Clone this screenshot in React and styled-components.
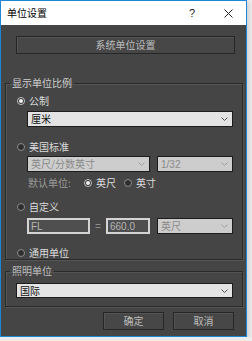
import React from "react";
import styled, { createGlobalStyle, css } from "styled-components";

const Global = createGlobalStyle`
  html, body { margin: 0; padding: 0; background: #ececec; }
  body { font-family: "Noto Sans CJK SC", "Noto Sans", sans-serif; font-size: 10px; }
  * { box-sizing: border-box; }
`;

const Win = styled.div`
  width: 247px;
  height: 337px;
  border: 1px solid #1c87d6;
  display: flex;
  flex-direction: column;
  background: #454545;
  box-shadow: 2px 2px 4px rgba(0,0,0,0.12);
`;

const TitleBar = styled.div`
  height: 24px;
  background: #ffffff;
  display: flex;
  align-items: center;
  padding-left: 6px;
  color: #000;
  font-size: 10px;
  line-height: 12px;
`;

const Title = styled.div`
  flex: 1;
`;

const TitleBtn = styled.div`
  width: ${p => p.$w}px;
  height: 24px;
  display: flex;
  align-items: center;
  justify-content: center;
  color: #222;
  font-family: "Liberation Sans", sans-serif;
  font-size: 11px;
`;

const Body = styled.div`
  flex: 1;
  display: flex;
  flex-direction: column;
  color: #d8d8d8;
`;

const btnBase = css`
  height: 18px;
  background: #474747;
  border: 1px solid #262626;
  box-shadow: inset 1px 1px 0 #535353;
  color: #bdbdbd;
  font-family: inherit;
  font-size: 10px;
  line-height: 12px;
  padding: 0;
  display: flex;
  align-items: center;
  justify-content: center;
`;

const SysButton = styled.button`
  ${btnBase};
  width: 219px;
  margin: 11px 0 0 15px;
`;

const Group = styled.fieldset`
  margin: ${p => p.$mt}px 0 0 4px;
  width: 238px;
  padding: 0 0 ${p => p.$pb}px 0;
  border: 1px solid #2a2a2a;
  box-shadow: inset 1px 1px 0 #555555, 1px 1px 0 #555555;
  display: flex;
  flex-direction: column;
  min-width: 0;
`;

const Legend = styled.legend`
  margin-left: 4px;
  padding: 0 2px;
  font-size: 10px;
  line-height: 12px;
  color: ${p => p.$c || "#cfcfcf"};
`;

const RadioRow = styled.div`
  height: ${p => p.$h || 14}px;
  margin-top: ${p => p.$mt}px;
  padding-left: 11px;
  display: flex;
  align-items: center;
  gap: 4px;
  font-size: 10px;
  line-height: 12px;
  color: ${p => p.$c || "#dcdcdc"};
`;

const RadioDot = styled.span`
  width: 8px;
  height: 8px;
  border-radius: 50%;
  border: 1px solid ${p => (p.$on ? "#c8c8c8" : "#8c8c8c")};
  background: #2e2e2e;
  display: flex;
  align-items: center;
  justify-content: center;
  flex: none;
  &::after {
    content: "";
    width: 4px;
    height: 4px;
    border-radius: 50%;
    background: ${p => (p.$on ? "#f2f2f2" : "transparent")};
  }
`;

const Radio = ({ on, children }) => (
  <>
    <RadioDot $on={on} />
    <span>{children}</span>
  </>
);

const Select = styled.div`
  width: ${p => p.$w}px;
  height: ${p => p.$h || 16}px;
  margin-left: ${p => p.$ml || 0}px;
  margin-top: ${p => p.$mt || 0}px;
  background: ${p => (p.$dis ? "#cdcdcd" : "#e3e3e3")};
  border: 1px solid #1c1c1c;
  color: ${p => (p.$dis ? "#8a8a8a" : "#111")};
  display: flex;
  align-items: center;
  padding: 0 4px 0 3px;
  font-size: 10px;
  line-height: 12px;
  flex: none;
`;

const SelText = styled.span`
  flex: 1;
  white-space: nowrap;
`;

const Chevron = ({ dis }) => (
  <svg width="7" height="4" viewBox="0 0 7 4">
    <path d="M0.5 0.5 L3.5 3.5 L6.5 0.5" fill="none" stroke={dis ? "#a0a0a0" : "#555"} strokeWidth="1" />
  </svg>
);

const Dropdown = ({ w, h, ml, mt, dis, children }) => (
  <Select $w={w} $h={h} $ml={ml} $mt={mt} $dis={dis}>
    <SelText>{children}</SelText>
    <Chevron dis={dis} />
  </Select>
);

const FieldRow = styled.div`
  height: 16px;
  margin-top: ${p => p.$mt}px;
  margin-left: 21px;
  display: flex;
  align-items: center;
`;

const TextField = styled.div`
  width: ${p => p.$w}px;
  height: 16px;
  border: 2px solid #d4d4d4;
  background: #4f4f4f;
  color: #b4b4b4;
  font-family: "Liberation Sans", sans-serif;
  font-size: 10px;
  display: flex;
  align-items: center;
  padding-left: 2px;
  flex: none;
`;

const Equals = styled.span`
  width: 16px;
  text-align: center;
  color: #8a8a8a;
  font-family: "Liberation Sans", sans-serif;
  font-size: 10px;
`;

const DefaultRow = styled.div`
  height: 14px;
  margin-top: 4px;
  padding-left: 22px;
  display: flex;
  align-items: center;
  font-size: 10px;
  line-height: 12px;
  color: #dcdcdc;
`;

const DimLabel = styled.span`
  color: #9c9c9c;
  width: 56px;
`;

const RadioPair = styled.span`
  display: flex;
  align-items: center;
  gap: 4px;
  width: ${p => p.$w}px;
`;

const Latin = styled.span`
  font-family: "Liberation Sans", sans-serif;
  font-size: 10px;
`;

const Footer = styled.div`
  margin-top: 5px;
  padding-right: 12px;
  display: flex;
  justify-content: flex-end;
  gap: 9px;
`;

const FootButton = styled.button`
  ${btnBase};
  width: 61px;
`;

export default function App() {
  return (
    <>
      <Global />
      <Win>
        <TitleBar>
          <Title>单位设置</Title>
          <TitleBtn $w={36}>?</TitleBtn>
          <TitleBtn $w={36}>
            <svg width="9" height="9" viewBox="0 0 9 9">
              <path d="M0.5 0.5 L8.5 8.5 M8.5 0.5 L0.5 8.5" stroke="#222" strokeWidth="1" />
            </svg>
          </TitleBtn>
        </TitleBar>
        <Body>
          <SysButton>系统单位设置</SysButton>
          <Group $mt={23} $pb={0}>
            <Legend>显示单位比例</Legend>
            <RadioRow $mt={5}>
              <Radio on>公制</Radio>
            </RadioRow>
            <Dropdown w={206} ml={21} mt={3}>厘米</Dropdown>
            <RadioRow $mt={13}>
              <Radio>美国标准</Radio>
            </RadioRow>
            <FieldRow $mt={2}>
              <Dropdown w={123} dis>英尺/分数英寸</Dropdown>
              <Dropdown w={76} ml={7} dis><Latin>1/32</Latin></Dropdown>
            </FieldRow>
            <DefaultRow>
              <DimLabel>默认单位:</DimLabel>
              <RadioPair $w={40}><Radio on>英尺</Radio></RadioPair>
              <RadioPair $w={40}><Radio>英寸</Radio></RadioPair>
            </DefaultRow>
            <RadioRow $mt={10}>
              <Radio>自定义</Radio>
            </RadioRow>
            <FieldRow $mt={4}>
              <TextField $w={63}>FL</TextField>
              <Equals>=</Equals>
              <TextField $w={44}>660.0</TextField>
              <Dropdown w={76} ml={7} dis>英尺</Dropdown>
            </FieldRow>
            <RadioRow $mt={12} $h={13}>
              <Radio>通用单位</Radio>
            </RadioRow>
          </Group>
          <Group $mt={5} $pb={8}>
            <Legend $c="#bdbdbd">照明单位</Legend>
            <Dropdown w={217} h={15} ml={10} mt={6}>国际</Dropdown>
          </Group>
          <Footer>
            <FootButton>确定</FootButton>
            <FootButton>取消</FootButton>
          </Footer>
        </Body>
      </Win>
    </>
  );
}
